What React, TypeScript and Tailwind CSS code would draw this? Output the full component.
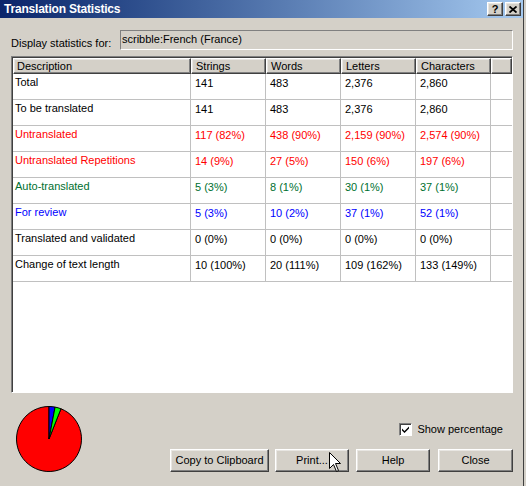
import React from "react";

interface StatRow {
  label: string;
  color: string;
  values: string[];
}

const rows: StatRow[] = [
  { label: "Total", color: "text-black", values: ["141", "483", "2,376", "2,860"] },
  { label: "To be translated", color: "text-black", values: ["141", "483", "2,376", "2,860"] },
  { label: "Untranslated", color: "text-[#ff0000]", values: ["117 (82%)", "438 (90%)", "2,159 (90%)", "2,574 (90%)"] },
  { label: "Untranslated Repetitions", color: "text-[#ff0000]", values: ["14 (9%)", "27 (5%)", "150 (6%)", "197 (6%)"] },
  { label: "Auto-translated", color: "text-[#006f2f]", values: ["5 (3%)", "8 (1%)", "30 (1%)", "37 (1%)"] },
  { label: "For review", color: "text-[#0000ff]", values: ["5 (3%)", "10 (2%)", "37 (1%)", "52 (1%)"] },
  { label: "Translated and validated", color: "text-black", values: ["0 (0%)", "0 (0%)", "0 (0%)", "0 (0%)"] },
  { label: "Change of text length", color: "text-black", values: ["10 (100%)", "20 (111%)", "109 (162%)", "133 (149%)"] },
];

const headers = ["Strings", "Words", "Letters", "Characters"];

// classic raised 3d edge for buttons
const raised =
  "border border-t-white border-l-white border-r-[#404040] border-b-[#404040] shadow-[inset_-1px_-1px_0_#808080,inset_1px_1px_0_#e8e6e2] bg-[#d4d0c8]";

function Button({ label, width, className = "" }: { label: string; width: string; className?: string }) {
  return (
    <button className={`${raised} ${width} h-[23px] text-[11px] text-black leading-none flex items-center justify-center ${className}`}>
      {label}
    </button>
  );
}

function Pie() {
  return (
    <svg width="68" height="68" viewBox="0 0 68 68">
      <path d="M34 34 L45.96 3.78 A32.5 32.5 0 1 1 34 1.5 Z" fill="#ff0000" stroke="#000" strokeWidth="1" />
      <path d="M34 34 L34 1.5 A32.5 32.5 0 0 1 40.09 2.08 Z" fill="#0000ff" stroke="#000" strokeWidth="1" />
      <path d="M34 34 L40.09 2.08 A32.5 32.5 0 0 1 45.96 3.78 Z" fill="#00ff00" stroke="#000" strokeWidth="1" />
    </svg>
  );
}

export default function App() {
  return (
    <div className="relative w-[526px] h-[486px] overflow-hidden bg-[#d4d0c8] font-['Liberation_Sans',Arial,sans-serif] text-[11px] text-black">
      <div className="w-[524px] h-full flex flex-col border-r border-[#404040]">
        {/* title bar */}
        <div className="h-[18px] flex items-center justify-between pl-[4px] pr-[2px] bg-gradient-to-r from-[#0a246a] to-[#a6caf0]">
          <span className="text-white font-bold text-[12px] tracking-[-0.2px] leading-none">Translation Statistics</span>
          <div className="flex gap-[2px]">
            <div className={`${raised} w-[16px] h-[14px] flex items-center justify-center text-[11px] font-bold leading-none`}>?</div>
            <div className={`${raised} w-[16px] h-[14px] flex items-center justify-center`}>
              <svg width="8" height="7" viewBox="0 0 8 7">
                <path d="M0.5 0.5 L7.5 6.5 M7.5 0.5 L0.5 6.5" stroke="#000" strokeWidth="1.8" />
              </svg>
            </div>
          </div>
        </div>

        <div className="flex-1 flex flex-col pl-[11px] pr-[10px]">
          {/* display statistics for */}
          <div className="mt-[12px] flex items-start">
            <span className="w-[109px] pt-[7px] leading-[13px]">Display statistics for:</span>
            <div className="flex-1 h-[20px] border border-t-[#808080] border-l-[#808080] border-r-white border-b-white pl-[1px] pt-[2px] leading-[13px]">
              scribble:French (France)
            </div>
          </div>

          {/* statistics grid */}
          <div className="mt-[6px] h-[337px] flex flex-col bg-white border border-t-[#808080] border-l-[#808080] border-r-white border-b-white shadow-[inset_1px_1px_0_#404040]">
            <div className="flex flex-col flex-1 pt-[1px] pl-[1px]">
              <div className="flex h-[16px]">
                <div className={`w-[178px] ${raised} pl-[3px] leading-[14px]`}>Description</div>
                {headers.map((h) => (
                  <div key={h} className={`w-[75px] ${raised} pl-[4px] leading-[14px]`}>{h}</div>
                ))}
                <div className={`flex-1 ${raised}`} />
              </div>
              {rows.map((r) => (
                <div key={r.label} className={`flex h-[26px] border-b border-[#c0c0c0] ${r.color}`}>
                  <div className="w-[178px] border-r border-[#c0c0c0] pl-[2px] pt-[2px] leading-[13px]">{r.label}</div>
                  {r.values.map((v, i) => (
                    <div key={i} className="w-[75px] border-r border-[#c0c0c0] pl-[4px] pt-[3px] leading-[13px]">{v}</div>
                  ))}
                  <div className="flex-1" />
                </div>
              ))}
              <div className="flex flex-1" />
            </div>
          </div>

          {/* bottom area */}
          <div className="flex flex-1">
            <div className="ml-[4px] mt-[12px]">
              <Pie />
            </div>
            <div className="flex-1 flex flex-col items-end">
              <div className="mt-[30px] mr-[10px] flex items-center gap-[5px]">
                <div className="w-[13px] h-[13px] bg-white border border-t-[#808080] border-l-[#808080] border-r-white border-b-white shadow-[inset_1px_1px_0_#404040] flex items-center justify-center">
                  <svg width="9" height="9" viewBox="0 0 9 9">
                    <path d="M1 3.5 L3.5 6 L8 1.5 L8 3.5 L3.5 8 L1 5.5 Z" fill="#000" />
                  </svg>
                </div>
                <span className="leading-[13px]">Show percentage</span>
              </div>
              <div className="mt-[13px] flex">
                <Button label="Copy to Clipboard" width="w-[99px]" />
                <Button label="Print..." width="w-[74px]" className="ml-[6px]" />
                <Button label="Help" width="w-[74px]" className="ml-[7px]" />
                <Button label="Close" width="w-[75px]" className="ml-[8px]" />
              </div>
            </div>
          </div>
        </div>
      </div>

      {/* mouse pointer over Print */}
      <svg className="absolute left-[329px] top-[452px]" width="13" height="21" viewBox="0 0 13 21">
        <path d="M0.5 0.5 L0.5 16.5 L4.5 12.5 L7.5 19.5 L9.5 18.5 L6.5 11.5 L11.5 11.5 Z" fill="#fff" stroke="#000" strokeWidth="1" />
      </svg>
    </div>
  );
}
